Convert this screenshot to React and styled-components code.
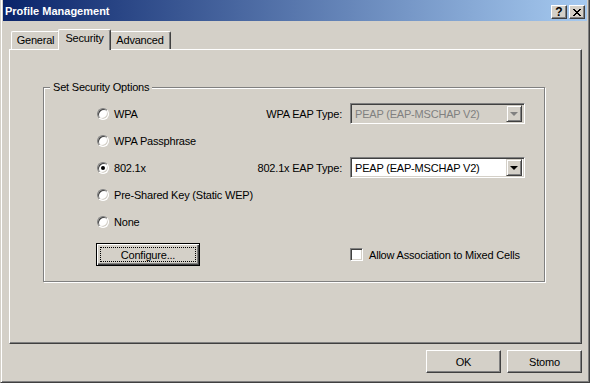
import { Fragment } from 'react';
import styled, { createGlobalStyle } from 'styled-components';

const GlobalStyle = createGlobalStyle`
  html, body { margin: 0; padding: 0; background: #d4d0c8; }
  body {
    font-family: "Liberation Sans", Arial, sans-serif;
    font-size: 11px;
    letter-spacing: -0.2px;
    color: #000;
  }
  * { box-sizing: border-box; }
`;

const Window = styled.div`
  width: 590px;
  height: 383px;
  display: flex;
  flex-direction: column;
  background: #d4d0c8;
  border-left: 1px solid #d4d0c8;
  border-right: 1px solid #404040;
  border-bottom: 1px solid #404040;
  box-shadow: inset 1px 0 #fff, inset -1px -1px #808080;
`;

const TitleBar = styled.div`
  height: 21px;
  margin: 0 2px;
  display: flex;
  align-items: center;
  padding-left: 2px;
  background: linear-gradient(to right, #0a246a, #a6caf0);
  color: #fff;
  font-weight: bold;
  letter-spacing: 0;
`;

const TitleText = styled.span`
  flex: 1;
  padding-top: 1px;
`;

const TitleButtons = styled.div`
  align-self: flex-end;
  margin: 0 2px 2px 0;
  display: flex;
  gap: 2px;
`;

const TitleButton = styled.div`
  width: 16px;
  height: 14px;
  display: flex;
  align-items: center;
  justify-content: center;
  background: #d4d0c8;
  color: #000;
  border: 1px solid;
  border-color: #fff #404040 #404040 #fff;
  box-shadow: inset -1px -1px #808080;
  font-size: 12px;
  font-weight: bold;
  line-height: 1;
`;

const Body = styled.div`
  flex: 1;
  padding: 8px 7px 0 8px;
  display: flex;
  flex-direction: column;
`;

const TabRow = styled.div`
  height: 20px;
  padding-left: 2px;
  display: flex;
  align-items: flex-end;
`;

const Tab = styled.div`
  position: relative;
  width: ${p => p.$w}px;
  height: ${p => (p.$active ? 21 : 18)}px;
  margin: 0 ${p => (p.$active ? -2 : 0)}px ${p => (p.$active ? -1 : 0)}px;
  z-index: ${p => (p.$active ? 1 : 0)};
  padding-top: 1px;
  line-height: 14px;
  text-align: center;
  background: #d4d0c8;
  border-top: 1px solid #fff;
  border-left: 1px solid #fff;
  border-right: 1px solid #404040;
  border-radius: 2px 2px 0 0;
  box-shadow: inset -1px 0 #808080;
`;

const Panel = styled.div`
  height: 295px;
  padding: 31px 36px 0 33px;
  border: 1px solid;
  border-color: #fff #404040 #404040 #fff;
  box-shadow: inset -1px -1px #808080;
`;

const GroupBox = styled.fieldset`
  margin: 0;
  padding: 0;
  min-width: 0;
  border: 1px solid #808080;
  box-shadow: inset 1px 1px #fff, 1px 1px #fff;
`;

const Legend = styled.legend`
  margin-left: 6px;
  padding: 0 3px;
  line-height: 13px;
  background: #d4d0c8;
`;

const OptionsGrid = styled.div`
  display: grid;
  grid-template-columns: minmax(0, 1fr) auto 175px;
  grid-template-rows: repeat(5, 27px) 31px;
  column-gap: 8px;
  align-items: center;
  padding: 6px 19px 15px 53px;
`;

const RadioOption = styled.label`
  grid-column: 1;
  display: flex;
  align-items: center;
  gap: 5px;
  white-space: nowrap;
`;

const Radio = styled.span`
  position: relative;
  width: 12px;
  height: 12px;
  flex: none;
  border-radius: 50%;
  background: #fff;
  border: 1px solid;
  border-color: #808080 #fff #fff #808080;
  box-shadow: inset 1px 1px #404040, inset -1px -1px #d4d0c8;

  &::after {
    content: '';
    display: ${p => (p.$checked ? 'block' : 'none')};
    position: absolute;
    left: 3px;
    top: 3px;
    width: 4px;
    height: 4px;
    border-radius: 50%;
    background: #000;
  }
`;

const EapLabel = styled.span`
  grid-column: 2;
  text-align: right;
`;

const Combo = styled.div`
  grid-column: 3;
  height: 21px;
  display: flex;
  align-items: center;
  padding: 0 2px 0 4px;
  background: ${p => (p.$disabled ? '#d4d0c8' : '#fff')};
  color: ${p => (p.$disabled ? '#808080' : '#000')};
  border: 1px solid;
  border-color: #808080 #fff #fff #808080;
  box-shadow: inset 1px 1px #404040, inset -1px -1px #d4d0c8;
`;

const ComboText = styled.span`
  flex: 1;
`;

const DropButton = styled.span`
  width: 16px;
  height: 17px;
  display: flex;
  align-items: center;
  justify-content: center;
  background: #d4d0c8;
  border: 1px solid;
  border-color: #d4d0c8 #404040 #404040 #d4d0c8;
  box-shadow: inset 1px 1px #fff, inset -1px -1px #808080;

  &::after {
    content: '';
    border-style: solid;
    border-width: 4px 4px 0 4px;
    border-color: ${p => (p.$disabled ? '#808080' : '#000')} transparent transparent transparent;
  }
`;

const ConfigureButton = styled.button`
  grid-column: 1;
  margin: 8px 0 0 -1px;
  width: 104px;
  height: 23px;
  padding: 0;
  font: inherit;
  letter-spacing: inherit;
  color: #000;
  background: #d4d0c8;
  border: 1px solid #000;
  box-shadow: inset 1px 1px #fff, inset -1px -1px #404040, inset -2px -2px #808080;
  outline: 1px dotted #000;
  outline-offset: -5px;
`;

const CheckOption = styled.label`
  grid-column: 3;
  margin-top: 8px;
  display: flex;
  align-items: center;
  gap: 6px;
  white-space: nowrap;
`;

const Checkbox = styled.span`
  width: 13px;
  height: 13px;
  flex: none;
  background: #fff;
  border: 1px solid;
  border-color: #808080 #fff #fff #808080;
  box-shadow: inset 1px 1px #404040, inset -1px -1px #d4d0c8;
`;

const Footer = styled.div`
  margin-top: 6px;
  display: flex;
  justify-content: flex-end;
  gap: 6px;
`;

const DialogButton = styled.button`
  width: 75px;
  height: 23px;
  padding: 0;
  font: inherit;
  letter-spacing: inherit;
  color: #000;
  background: #d4d0c8;
  border: 1px solid;
  border-color: #fff #404040 #404040 #fff;
  box-shadow: inset -1px -1px #808080;
`;

const options = [
  { label: 'WPA', eap: 'WPA EAP Type:', disabled: true },
  { label: 'WPA Passphrase' },
  { label: '802.1x', eap: '802.1x EAP Type:', checked: true },
  { label: 'Pre-Shared Key (Static WEP)' },
  { label: 'None' },
];

export default function App() {
  return (
    <>
      <GlobalStyle />
      <Window>
        <TitleBar>
          <TitleText>Profile Management</TitleText>
          <TitleButtons>
            <TitleButton>?</TitleButton>
            <TitleButton>
              <svg width="8" height="7" viewBox="0 0 8 7" shapeRendering="crispEdges">
                <path d="M0 0h2v1h-2zM6 0h2v1h-2zM1 1h2v1h-2zM5 1h2v1h-2zM2 2h4v1h-4zM3 3h2v1h-2zM2 4h4v1h-4zM1 5h2v1h-2zM5 5h2v1h-2zM0 6h2v1h-2zM6 6h2v1h-2z" fill="#000" />
              </svg>
            </TitleButton>
          </TitleButtons>
        </TitleBar>
        <Body>
          <TabRow>
            <Tab $w={49}>General</Tab>
            <Tab $w={53} $active>Security</Tab>
            <Tab $w={62}>Advanced</Tab>
          </TabRow>
          <Panel>
            <GroupBox>
              <Legend>Set Security Options</Legend>
              <OptionsGrid>
                {options.map(o => (
                  <Fragment key={o.label}>
                    <RadioOption>
                      <Radio $checked={o.checked} />
                      {o.label}
                    </RadioOption>
                    {o.eap && (
                      <>
                        <EapLabel>{o.eap}</EapLabel>
                        <Combo $disabled={o.disabled}>
                          <ComboText>PEAP (EAP-MSCHAP V2)</ComboText>
                          <DropButton $disabled={o.disabled} />
                        </Combo>
                      </>
                    )}
                  </Fragment>
                ))}
                <ConfigureButton>Configure...</ConfigureButton>
                <CheckOption>
                  <Checkbox />
                  Allow Association to Mixed Cells
                </CheckOption>
              </OptionsGrid>
            </GroupBox>
          </Panel>
          <Footer>
            <DialogButton>OK</DialogButton>
            <DialogButton>Stomo</DialogButton>
          </Footer>
        </Body>
      </Window>
    </>
  );
}
